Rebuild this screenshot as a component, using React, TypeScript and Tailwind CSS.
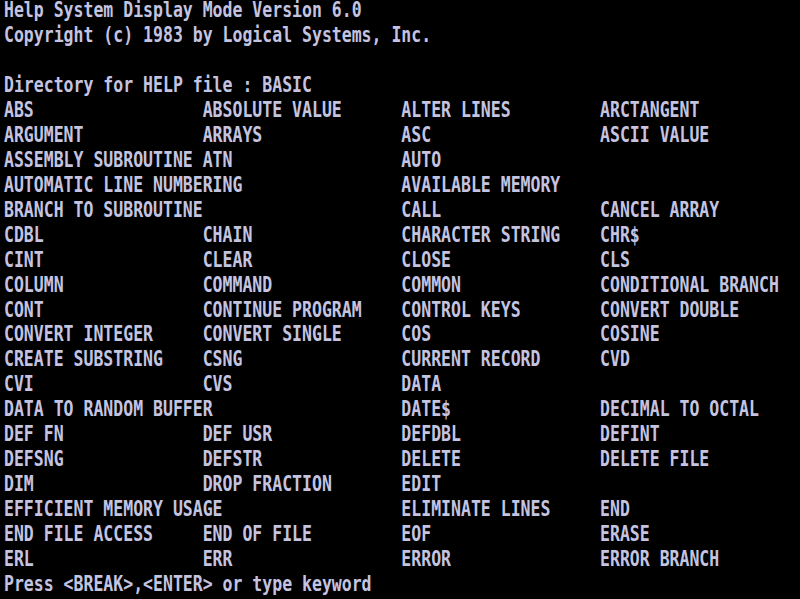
const header = [
  'Help System Display Mode Version 6.0',
  'Copyright (c) 1983 by Logical Systems, Inc.',
  '',
  'Directory for HELP file : BASIC',
];

// four 20-char columns; a long entry just runs into the next column
const topics: string[][] = [
  ['ABS', 'ABSOLUTE VALUE', 'ALTER LINES', 'ARCTANGENT'],
  ['ARGUMENT', 'ARRAYS', 'ASC', 'ASCII VALUE'],
  ['ASSEMBLY SUBROUTINE', 'ATN', 'AUTO', ''],
  ['AUTOMATIC LINE NUMBERING', '', 'AVAILABLE MEMORY', ''],
  ['BRANCH TO SUBROUTINE', '', 'CALL', 'CANCEL ARRAY'],
  ['CDBL', 'CHAIN', 'CHARACTER STRING', 'CHR$'],
  ['CINT', 'CLEAR', 'CLOSE', 'CLS'],
  ['COLUMN', 'COMMAND', 'COMMON', 'CONDITIONAL BRANCH'],
  ['CONT', 'CONTINUE PROGRAM', 'CONTROL KEYS', 'CONVERT DOUBLE'],
  ['CONVERT INTEGER', 'CONVERT SINGLE', 'COS', 'COSINE'],
  ['CREATE SUBSTRING', 'CSNG', 'CURRENT RECORD', 'CVD'],
  ['CVI', 'CVS', 'DATA', ''],
  ['DATA TO RANDOM BUFFER', '', 'DATE$', 'DECIMAL TO OCTAL'],
  ['DEF FN', 'DEF USR', 'DEFDBL', 'DEFINT'],
  ['DEFSNG', 'DEFSTR', 'DELETE', 'DELETE FILE'],
  ['DIM', 'DROP FRACTION', 'EDIT', ''],
  ['EFFICIENT MEMORY USAGE', '', 'ELIMINATE LINES', 'END'],
  ['END FILE ACCESS', 'END OF FILE', 'EOF', 'ERASE'],
  ['ERL', 'ERR', 'ERROR', 'ERROR BRANCH'],
];

function toLine(cells: string[]) {
  let line = '';
  cells.forEach((cell, i) => {
    if (!cell) return;
    line = line.padEnd(i * 20) + cell;
  });
  return line;
}

const lines = [
  ...header,
  ...topics.map(toLine),
  'Press <BREAK>,<ENTER> or type keyword',
];

export default function App() {
  return (
    <div className="h-[599px] w-[800px] overflow-hidden bg-black">
      <div className="grid h-full grid-rows-[repeat(24,1fr)] pl-[4px] font-['DejaVu_Sans_Mono','Liberation_Mono',monospace] text-[16.5px] font-bold leading-none text-[#c4c4e0]">
        {lines.map((line, i) => (
          <div key={i} className="whitespace-pre pt-[1px]">
            <span className="inline-block origin-top scale-y-[1.25]">{line || ' '}</span>
          </div>
        ))}
      </div>
    </div>
  );
}
